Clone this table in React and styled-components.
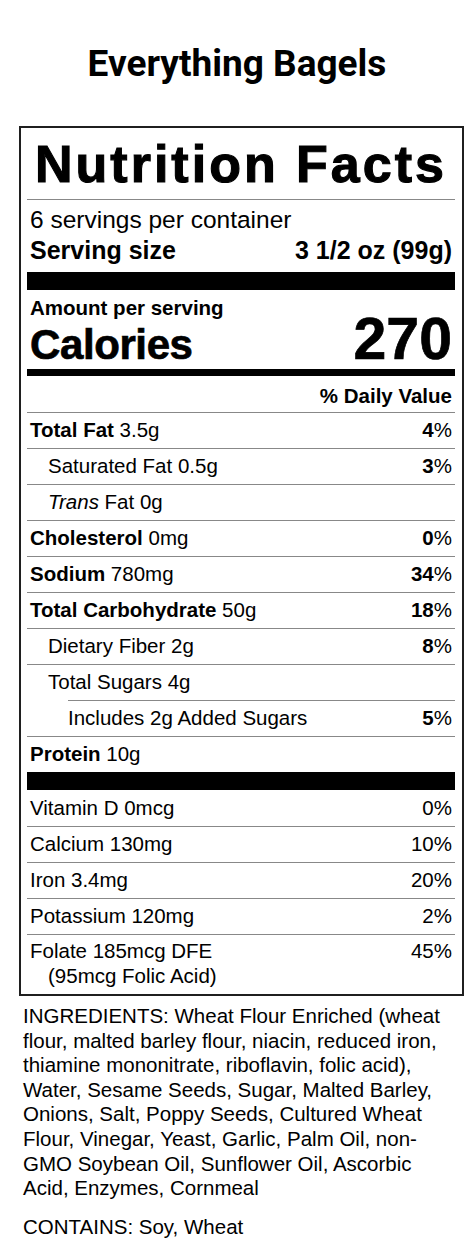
import React from 'react';
import styled, { createGlobalStyle } from 'styled-components';

const GlobalStyle = createGlobalStyle`
  body {
    margin: 0;
    background: #fff;
    color: #000;
    font-family: "Liberation Sans", Arial, sans-serif;
  }
`

const Page = styled.div`
  width: 474px;
  padding-bottom: 12px;
`

const Title = styled.h1`
  margin: 0;
  padding-top: 43px;
  font-family: Roboto, "Liberation Sans", sans-serif;
  font-weight: 700;
  font-size: 37px;
  line-height: 41px;
  text-align: center;
`

const Label = styled.section`
  margin: 42px 10px 0 19px;
  border: 2px solid #1f1f1f;
  padding: 0 7px 0 6px;
`

const Heading = styled.h2`
  margin: 0;
  padding-top: 10px;
  font-size: 52px;
  line-height: 52px;
  font-weight: 700;
  letter-spacing: 3px;
  -webkit-text-stroke: 1.1px #000;
  text-align: center;
  white-space: nowrap;
`

const Rule = styled.div`
  height: 1px;
  background: #888;
  margin-top: 9px;
`

const Servings = styled.div`
  padding: 7px 3px 0;
  font-size: 24.5px;
  line-height: 25px;
`

const SizeLine = styled.div`
  display: flex;
  justify-content: space-between;
  margin-top: 6px;
  font-size: 25px;
  font-weight: 700;
`

const Bar = styled.div`
  height: ${p => p.$h}px;
  background: #000;
  margin-top: ${p => p.$gap || 0}px;
`

const Amount = styled.div`
  padding: 7px 3px 0;
  font-size: 20.5px;
  line-height: 22px;
  font-weight: 700;
`

const CaloriesLine = styled.div`
  display: flex;
  justify-content: space-between;
  align-items: baseline;
  height: 45px;
  padding: 0 3px;
  font-weight: 700;
  -webkit-text-stroke: 0.7px #000;
`

const CaloriesWord = styled.span`
  font-size: 42px;
  line-height: 40px;
  letter-spacing: -0.4px;
`

const CaloriesValue = styled.span`
  font-size: 59px;
  line-height: 40px;
`

const DailyHead = styled.div`
  display: flex;
  justify-content: flex-end;
  align-items: center;
  height: 33px;
  padding: 3px 3px 0;
  font-size: 20.5px;
  font-weight: 700;
`

const Row = styled.div`
  display: flex;
  justify-content: space-between;
  align-items: ${p => (p.$tall ? 'flex-start' : 'center')};
  height: ${p => p.$h || 35}px;
  margin-left: ${p => p.$inset || 0}px;
  padding: ${p => (p.$tall ? '4px 3px 6px' : '0 3px')};
  padding-left: ${p => 3 + (p.$indent || 0)}px;
  border-top: ${p => (p.$noLine ? 'none' : '1px solid #888')};
  font-size: 20.5px;
  line-height: 24.6px;
  box-sizing: ${p => (p.$tall ? 'border-box' : 'content-box')};
`

const Sub = styled.div`
  padding-left: 18px;
`

const Pct = styled.span`
  white-space: nowrap;
`

const Footer = styled.div`
  margin: 8px 19px 0 23px;
  font-size: 20.5px;
  line-height: 24.6px;
`

const Contains = styled.p`
  margin: 14px 0 0;
`

const Pctv = ({ v, bold }) => (
  <Pct>{bold ? <b>{v}</b> : v}%</Pct>
)

export default function App() {
  return (
    <Page>
      <GlobalStyle />
      <Title>Everything Bagels</Title>
      <Label>
        <Heading>Nutrition Facts</Heading>
        <Rule />
        <Servings>
          <div>6 servings per container</div>
          <SizeLine>
            <span>Serving size</span>
            <span>3 1/2 oz (99g)</span>
          </SizeLine>
        </Servings>
        <Bar $h={18} $gap={9} />
        <Amount>Amount per serving</Amount>
        <CaloriesLine>
          <CaloriesWord>Calories</CaloriesWord>
          <CaloriesValue>270</CaloriesValue>
        </CaloriesLine>
        <Bar $h={7} $gap={5} />
        <DailyHead>% Daily Value</DailyHead>
        <Row>
          <span><b>Total Fat</b> 3.5g</span>
          <Pctv v="4" bold />
        </Row>
        <Row $indent={18}>
          <span>Saturated Fat 0.5g</span>
          <Pctv v="3" bold />
        </Row>
        <Row $indent={18}>
          <span><i>Trans</i> Fat 0g</span>
        </Row>
        <Row>
          <span><b>Cholesterol</b> 0mg</span>
          <Pctv v="0" bold />
        </Row>
        <Row>
          <span><b>Sodium</b> 780mg</span>
          <Pctv v="34" bold />
        </Row>
        <Row>
          <span><b>Total Carbohydrate</b> 50g</span>
          <Pctv v="18" bold />
        </Row>
        <Row $indent={18}>
          <span>Dietary Fiber 2g</span>
          <Pctv v="8" bold />
        </Row>
        <Row $indent={18}>
          <span>Total Sugars 4g</span>
        </Row>
        <Row $inset={41} $indent={-3}>
          <span>Includes 2g Added Sugars</span>
          <Pctv v="5" bold />
        </Row>
        <Row>
          <span><b>Protein</b> 10g</span>
        </Row>
        <Bar $h={18} />
        <Row $noLine $h={36}>
          <span>Vitamin D 0mcg</span>
          <Pctv v="0" />
        </Row>
        <Row>
          <span>Calcium 130mg</span>
          <Pctv v="10" />
        </Row>
        <Row>
          <span>Iron 3.4mg</span>
          <Pctv v="20" />
        </Row>
        <Row>
          <span>Potassium 120mg</span>
          <Pctv v="2" />
        </Row>
        <Row $tall $h={60}>
          <div>
            <div>Folate 185mcg DFE</div>
            <Sub>(95mcg Folic Acid)</Sub>
          </div>
          <Pctv v="45" />
        </Row>
      </Label>
      <Footer>
        <div>
          INGREDIENTS: Wheat Flour Enriched (wheat flour, malted barley flour, niacin,
          reduced iron, thiamine mononitrate, riboflavin, folic acid), Water, Sesame
          Seeds, Sugar, Malted Barley, Onions, Salt, Poppy Seeds, Cultured Wheat Flour,
          Vinegar, Yeast, Garlic, Palm Oil, non-GMO Soybean Oil, Sunflower Oil, Ascorbic
          Acid, Enzymes, Cornmeal
        </div>
        <Contains>CONTAINS: Soy, Wheat</Contains>
      </Footer>
    </Page>
  );
}
